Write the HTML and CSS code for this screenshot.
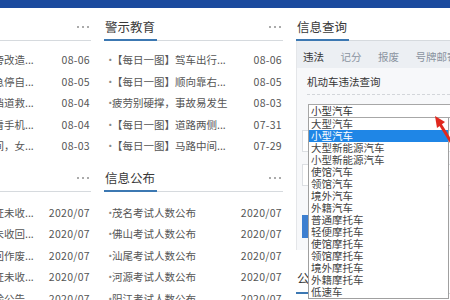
FILE: index.html
```html
<!DOCTYPE html>
<html lang="zh-CN">
<head>
<meta charset="utf-8">
<title>信息查询</title>
<link rel="stylesheet" href="styles.css">
</head>
<body>
<div class="topbar"></div>
<div class="main">
  <div class="col">
    <section class="block">
      <div class="hd"><span class="ttl">交通资讯</span><span class="more"><i></i><i></i><i></i></span></div>
      <ul class="list">
        <li><span class="t"><i class="dot">•</i>全省安全隐患路旁改造...</span><span class="date">08-06</span></li>
        <li><span class="t"><i class="dot">•</i>高速路上遇故障急停自...</span><span class="date">08-05</span></li>
        <li><span class="t"><i class="dot">•</i>事故发生后车辆挡道救...</span><span class="date">08-04</span></li>
        <li><span class="t"><i class="dot">•</i>驾车时不要低头看手机...</span><span class="date">08-04</span></li>
        <li><span class="t"><i class="dot">•</i>凌晨两点多的时间，女...</span><span class="date">08-03</span></li>
      </ul>
    </section>
    <section class="block">
      <div class="hd"><span class="ttl">通知公告</span><span class="more"><i></i><i></i><i></i></span></div>
      <ul class="list">
        <li><span class="t"><i class="dot">•</i>关于注销的驾驶证未收...</span><span class="date">2020/07</span></li>
        <li><span class="t"><i class="dot">•</i>作废机动车号牌未收回...</span><span class="date">2020/07</span></li>
        <li><span class="t"><i class="dot">•</i>机动车行驶证收回作废...</span><span class="date">2020/07</span></li>
        <li><span class="t"><i class="dot">•</i>注销机动车行驶证未收...</span><span class="date">2020/07</span></li>
        <li><span class="t"><i class="dot">•</i>机动车逾期未检验公告</span><span class="date">2020/07</span></li>
      </ul>
    </section>
  </div>
  <div class="col">
    <section class="block">
      <div class="hd"><span class="ttl">警示教育</span><span class="more"><i></i><i></i><i></i></span></div>
      <ul class="list">
        <li><span class="t"><i class="dot">•</i>【每日一图】驾车出行...</span><span class="date">08-06</span></li>
        <li><span class="t"><i class="dot">•</i>【每日一图】顺向靠右...</span><span class="date">08-05</span></li>
        <li><span class="t"><i class="dot">•</i>疲劳别硬撑，事故易发生</span><span class="date">08-03</span></li>
        <li><span class="t"><i class="dot">•</i>【每日一图】道路两侧...</span><span class="date">07-31</span></li>
        <li><span class="t"><i class="dot">•</i>【每日一图】马路中间...</span><span class="date">07-29</span></li>
      </ul>
    </section>
    <section class="block">
      <div class="hd"><span class="ttl">信息公布</span><span class="more"><i></i><i></i><i></i></span></div>
      <ul class="list">
        <li><span class="t"><i class="dot">•</i>茂名考试人数公布</span><span class="date">2020/07</span></li>
        <li><span class="t"><i class="dot">•</i>佛山考试人数公布</span><span class="date">2020/07</span></li>
        <li><span class="t"><i class="dot">•</i>汕尾考试人数公布</span><span class="date">2020/07</span></li>
        <li><span class="t"><i class="dot">•</i>河源考试人数公布</span><span class="date">2020/07</span></li>
        <li><span class="t"><i class="dot">•</i>阳江考试人数公布</span><span class="date">2020/07</span></li>
      </ul>
    </section>
  </div>
  <div class="col">
    <section class="block">
      <div class="hd"><span class="ttl">信息查询</span></div>
      <div class="panel">
        <div class="tabs">
          <span class="tab on">违法</span>
          <span class="tab">记分</span>
          <span class="tab">报废</span>
          <span class="tab">号牌邮寄</span>
        </div>
        <div class="form">
          <div class="ftitle">机动车违法查询</div>
          <div class="select">小型汽车
            <ul class="options">
              <li>大型汽车</li>
              <li class="sel">小型汽车</li>
              <li>大型新能源汽车</li>
              <li>小型新能源汽车</li>
              <li>使馆汽车</li>
              <li>领馆汽车</li>
              <li>境外汽车</li>
              <li>外籍汽车</li>
              <li>普通摩托车</li>
              <li>轻便摩托车</li>
              <li>使馆摩托车</li>
              <li>领馆摩托车</li>
              <li>境外摩托车</li>
              <li>外籍摩托车</li>
              <li>低速车</li>
            </ul>
          </div>
          <div class="input"></div>
          <div class="input"></div>
          <div class="btn">查询</div>
        </div>
      </div>
    </section>
    <section class="block">
      <div class="hd hd2"><span class="ttl">公告通知</span></div>
    </section>
  </div>
</div>
<svg class="arrow" width="26" height="40" viewBox="0 0 26 40">
  <line x1="15" y1="15" x2="28" y2="36" stroke="#e0281e" stroke-width="3"/>
  <polygon points="10,7 20,13 12,19" fill="#e0281e"/>
</svg>
</body>
</html>
```
FILE: styles.css
```css
html, body {
  margin: 0;
  padding: 0;
}
body {
  width: 450px;
  height: 300px;
  overflow: hidden;
  position: relative;
  background: #fff;
  font-family: "Noto Sans CJK SC", "Microsoft YaHei", sans-serif;
  color: #555;
}
.topbar {
  height: 8px;
  background: #1b4a9e;
}
.main {
  display: grid;
  grid-template-columns: 179px 179px 179px;
  column-gap: 13px;
  margin-left: -88px;
}
.hd {
  display: flex;
  justify-content: space-between;
  align-items: flex-end;
  border-bottom: 1px solid #d6dade;
  padding-top: 10px;
}
.ttl {
  font-size: 12.5px;
  line-height: 18px;
  color: #3a3a3a;
  padding: 0 2px 3px 1px;
  border-bottom: 2px solid #3c78b2;
  margin-bottom: -1px;
  white-space: nowrap;
}
.more {
  display: flex;
  gap: 3px;
  padding: 0 2px 12px 0;
}
.more i {
  display: block;
  width: 2px;
  height: 2px;
  border-radius: 50%;
  background: #8f8f8f;
}
.list {
  list-style: none;
  margin: 0;
  padding: 8px 0 0;
}
.block + .block .list {
  padding-top: 10px;
}
.block + .block .hd {
  padding-top: 12px;
}
.list li {
  display: flex;
  justify-content: space-between;
  height: 21.5px;
  line-height: 21.5px;
  font-size: 10.5px;
  white-space: nowrap;
  padding: 0 1px 0 1px;
}
.dot {
  font-style: normal;
  display: inline-block;
  width: 7px;
  color: #888;
}
.date {
  color: #555;
  letter-spacing: 0.3px;
}
.panel {
  height: 209px;
  background: #f7f8fa;
  border-left: 1px solid #e4e6e9;
}
.tabs {
  display: flex;
  gap: 16.5px;
  height: 27px;
  box-sizing: border-box;
  padding: 9px 0 0 6px;
  background: #eceff3;
  font-size: 10.5px;
  line-height: 14px;
  white-space: nowrap;
}
.tab {
  color: #8a93a0;
}
.tab.on {
  color: #333;
}
.form {
  padding: 7px 0 0 10px;
}
.ftitle {
  font-size: 10.5px;
  line-height: 14px;
  color: #333;
  padding-bottom: 5px;
  border-bottom: 1px dashed #d3d6da;
}
.select {
  position: relative;
  margin-top: 9px;
  margin-left: 1px;
  height: 12px;
  border: 1px solid #a7a7a7;
  background: #fff;
  font-size: 10.5px;
  line-height: 12px;
  padding-left: 2px;
  color: #333;
}
.options {
  position: absolute;
  top: 13px;
  left: -1px;
  width: 139px;
  margin: 0;
  padding: 0;
  list-style: none;
  background: #fff;
  border: 1px solid #a0a0a0;
  border-top: none;
  z-index: 2;
}
.options li {
  height: 12px;
  line-height: 12px;
  padding-left: 2px;
  color: #444;
  white-space: nowrap;
}
.options li.sel {
  background: #1f86e6;
  color: #fff;
}
.input {
  height: 20px;
  margin: 12px 0 0 -5px;
  border: 1px solid #dcdfe3;
  background: #fff;
}
.btn {
  margin: 29px 0 0 -5px;
  width: 60px;
  height: 23px;
  background: #3d7fd0;
  color: #fff;
  font-size: 10.5px;
  line-height: 23px;
  text-align: center;
}
.hd2 {
  padding-top: 19px !important;
}
.hd2 .ttl {
  padding-bottom: 5px;
}
.arrow {
  position: absolute;
  left: 425px;
  top: 109px;
  z-index: 5;
}
```
